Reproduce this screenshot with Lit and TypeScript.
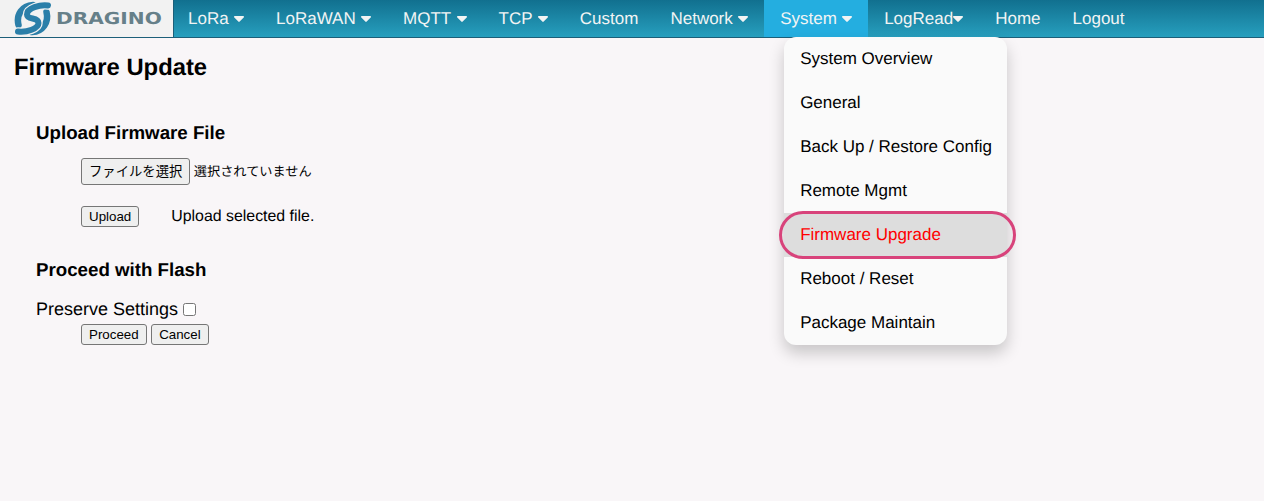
import { LitElement, html, css, svg } from "lit";
import { customElement } from "lit/decorators.js";

const caret = html`<svg class="caret" viewBox="0 0 10 6" width="10" height="6" aria-hidden="true"><path d="M1 0h8c.9 0 1.3 1 .7 1.6L5.7 5.6a1 1 0 0 1-1.4 0L.3 1.6C-.3 1 .1 0 1 0z" fill="currentColor"/></svg>`;

const logoMark = svg`
  <g fill="none" stroke-linecap="round">
    <path d="M4.5 24C2 14 8 4.5 19 4" stroke="#2b7fa9" stroke-width="6.5"/>
    <path d="M32.5 11C35 21 29 30.5 18 31" stroke="#2b7fa9" stroke-width="6.5"/>
    <path d="M34 4.5C26 3.5 13 7 13 13.5C13 19.5 24.5 15.5 24.5 22C24.5 27.5 13 31.5 4 30.5" stroke="#f2f2f2" stroke-width="8.5"/>
    <path d="M34 4.5C26 3.5 13 7 13 13.5C13 19.5 24.5 15.5 24.5 22C24.5 27.5 13 31.5 4 30.5" stroke="#2b7fa9" stroke-width="6"/>
  </g>
`;

@customElement("app-root")
export class AppRoot extends LitElement {
  static styles = css`
    :host {
      display: block;
      min-height: 501px;
      background: #f9f6f8;
      font-family: "Liberation Sans", Arial, sans-serif;
      color: #000;
      position: relative;
      text-rendering: geometricPrecision;
    }
    .nav {
      display: flex;
      height: 37px;
      border-bottom: 1px solid #1c5f79;
      background: linear-gradient(180deg, #11708f 0%, #279fbe 100%);
    }
    .logo {
      flex: none;
      background: #f2f2f2;
      border-right: 1px solid #1c5f79;
      display: flex;
      align-items: center;
      gap: 4px;
      padding-left: 14px;
      box-sizing: border-box;
      width: 174px;
    }
    .logo svg { flex: none; }
    .word {
      font-family: "DejaVu Sans", sans-serif;
      font-weight: 700;
      font-size: 16.5px;
      color: #668089;
      transform: scaleX(1.22);
      transform-origin: left center;
    }
    .items { display: flex; margin-left: -2px; }
    .item {
      position: relative;
      display: flex;
      align-items: center;
      gap: 5.35px;
      padding: 0 16px;
      font-size: 17px;
      color: #f2f4f4;
      white-space: nowrap;
    }
    .item.tight { gap: 0; }
    .item.active { background: #24aee0; }
    .caret { flex: none; margin-top: 1px; }
    .menu {
      position: absolute;
      top: 37px;
      left: 20px;
      width: 223px;
      list-style: none;
      margin: 0;
      padding: 0;
      background: #fafafa;
      border-radius: 12px;
      box-shadow: 0 8px 16px rgba(0, 0, 0, 0.2);
      color: #000;
      z-index: 2;
    }
    .menu li {
      height: 44px;
      display: flex;
      align-items: center;
      padding-left: 16px;
      position: relative;
    }
    .menu li.current { background: #dddddd; color: #f00; }
    .ring {
      position: absolute;
      left: -5px;
      right: -9px;
      top: -2px;
      bottom: -2px;
      border: 3px solid #d8437b;
      border-radius: 25px;
      pointer-events: none;
    }
    main { padding: 16px 14px 0; }
    h2 {
      margin: 0;
      font-size: 23.8px;
      line-height: 28px;
      font-weight: 700;
    }
    .panel { padding: 40px 0 0 22px; }
    h3 {
      margin: 0;
      font-size: 18.72px;
      line-height: 22px;
      font-weight: 700;
    }
    .row { display: flex; align-items: center; padding-left: 45px; }
    .file-row { margin-top: 14px; gap: 3.5px; }
    .file-note {
      font-family: "Liberation Sans", "Noto Sans CJK JP", sans-serif;
      font-size: 13.2px;
      margin-top: -2px;
    }
    .upload-row { margin-top: 21px; gap: 32px; font-size: 15.9px; }
    .flash { margin-top: 32px; }
    .preserve {
      display: flex;
      align-items: center;
      gap: 5px;
      margin-top: 18px;
      font-size: 18px;
      line-height: 21px;
    }
    .check {
      width: 13px;
      height: 13px;
      box-sizing: border-box;
      border: 1px solid #767676;
      border-radius: 2.5px;
      background: #fff;
      margin: 0;
      appearance: none;
    }
    .actions { gap: 4px; margin-top: 4px; }
    button {
      font-family: "Liberation Sans", "Noto Sans CJK JP", sans-serif;
      font-size: 13.33px;
      background: #efefef;
      border: 1px solid #767676;
      border-radius: 3px;
      color: #000;
      padding: 1px 7px;
      height: 21px;
      line-height: 17px;
      margin: 0;
    }
    .choose { height: 27px; font-size: 13.33px; padding: 1px 7px; }
    .cancel { padding: 1px 7.5px; }
  `;

  render() {
    return html`
      <nav class="nav">
        <div class="logo">
          <svg width="38" height="36" viewBox="0 0 38 36" aria-hidden="true">${logoMark}</svg>
          <span class="word">DRAGINO</span>
        </div>
        <div class="items">
          <div class="item">LoRa ${caret}</div>
          <div class="item">LoRaWAN ${caret}</div>
          <div class="item">MQTT ${caret}</div>
          <div class="item">TCP ${caret}</div>
          <div class="item">Custom</div>
          <div class="item">Network ${caret}</div>
          <div class="item active">
            System ${caret}
            <ul class="menu">
              <li>System Overview</li>
              <li>General</li>
              <li>Back Up / Restore Config</li>
              <li>Remote Mgmt</li>
              <li class="current">Firmware Upgrade<span class="ring"></span></li>
              <li>Reboot / Reset</li>
              <li>Package Maintain</li>
            </ul>
          </div>
          <div class="item tight">LogRead${caret}</div>
          <div class="item">Home</div>
          <div class="item">Logout</div>
        </div>
      </nav>
      <main>
        <h2>Firmware Update</h2>
        <section class="panel">
          <h3>Upload Firmware File</h3>
          <div class="row file-row">
            <button class="choose">ファイルを選択</button>
            <span class="file-note">選択されていません</span>
          </div>
          <div class="row upload-row">
            <button>Upload</button>
            <span>Upload selected file.</span>
          </div>
          <h3 class="flash">Proceed with Flash</h3>
          <label class="preserve">Preserve Settings <input class="check" type="checkbox" /></label>
          <div class="row actions">
            <button>Proceed</button>
            <button class="cancel">Cancel</button>
          </div>
        </section>
      </main>
    `;
  }
}
